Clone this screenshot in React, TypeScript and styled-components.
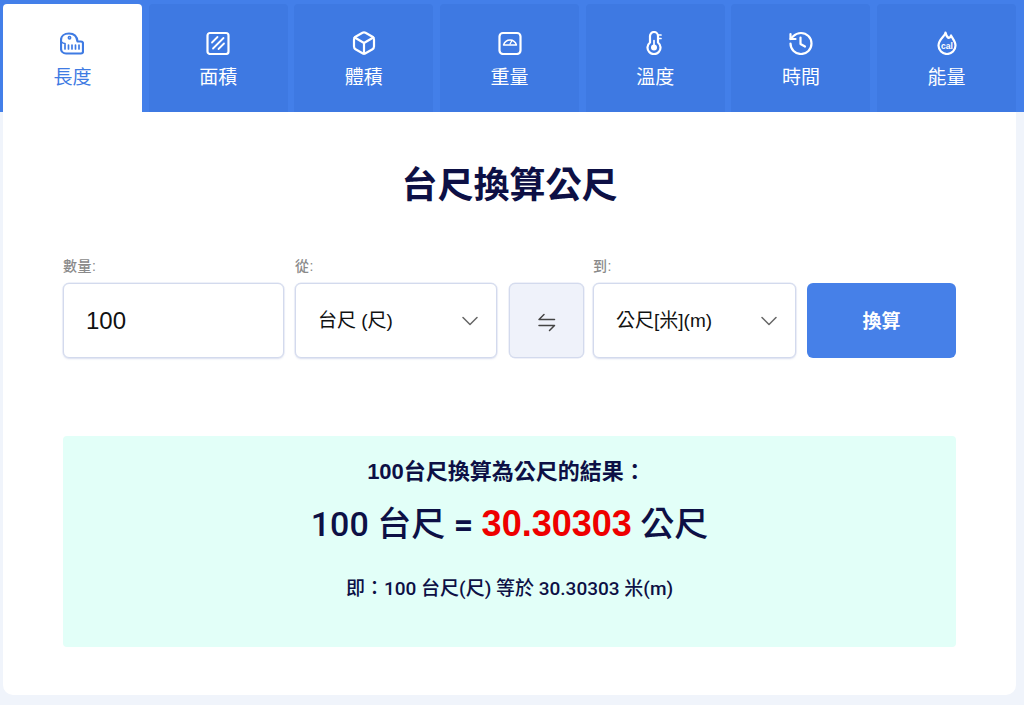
import * as React from 'react';
import styled, { createGlobalStyle } from 'styled-components';

const GlobalStyle = createGlobalStyle`
  html, body {
    margin: 0;
    background: #f0f4fb;
  }
  body {
    font-family: "Liberation Sans", "Noto Sans CJK TC", sans-serif;
    color: #0d1045;
  }
`;

const Page = styled.div`
  width: 1024px;
  height: 705px;
  overflow: hidden;
`;

const TabBar = styled.nav`
  display: flex;
  gap: 6.800px;
  height: 112px;
  padding: 4px 8px 0 3px;
  box-sizing: border-box;
  background: #437fe9;
`;

const Tab = styled.a<{ $active?: boolean }>`
  flex: 1;
  display: flex;
  flex-direction: column;
  align-items: center;
  padding-top: 27px;
  border-radius: 4px 4px 0 0;
  background: ${(p) => (p.$active ? '#ffffff' : '#3e79e2')};
  color: ${(p) => (p.$active ? '#3f7be3' : '#ffffff')};
  font-size: 19px;
  line-height: 24px;
  svg {
    display: block;
    margin-bottom: 11px;
  }
`;

const Card = styled.main`
  width: 1013px;
  height: 583px;
  margin-left: 3px;
  padding: 0 60px;
  box-sizing: border-box;
  background: #ffffff;
  border-radius: 0 0 10px 10px;
`;

const Title = styled.h1`
  margin: 0;
  padding-top: 50px;
  height: 141px;
  box-sizing: border-box;
  font-size: 36px;
  line-height: 48px;
  font-weight: 700;
  text-align: center;
  color: #0d1045;
`;

const Form = styled.div`
  display: flex;
  align-items: flex-end;
  height: 105px;
`;

const Field = styled.div<{ $w: number; $mr: number }>`
  width: ${(p) => p.$w}px;
  margin-right: ${(p) => p.$mr}px;
  flex: none;
`;

const Label = styled.label`
  display: block;
  height: 27px;
  font-size: 14px;
  line-height: 20px;
  font-weight: 500;
  letter-spacing: 0.500px;
  color: #8a8a8a;
`;

const Control = styled.div`
  position: relative;
  height: 75px;
`;

const controlBox = `
  width: 100%;
  height: 75px;
  box-sizing: border-box;
  border: 1px solid #d3daed;
  border-radius: 6px;
  box-shadow: 0 0 0 0.500px #dfe4f3, 0 1px 2px rgba(80, 100, 170, 0.2);
  background: #ffffff;
  font-family: "Liberation Sans", "Noto Sans CJK TC", sans-serif;
  color: #111111;
  outline: none;
`;

const Input = styled.input`
  ${controlBox}
  padding: 0 22px;
  font-size: 24px;
`;

const Select = styled.select`
  ${controlBox}
  appearance: none;
  padding: 0 22px;
  font-size: 19px;
`;

const Chevron = styled.svg`
  position: absolute;
  right: 19px;
  top: 33px;
  pointer-events: none;
`;

const SwapButton = styled.button`
  flex: none;
  width: 75px;
  height: 75px;
  margin-right: 9px;
  padding: 0;
  display: flex;
  align-items: center;
  justify-content: center;
  border: 1px solid #d3daed;
  border-radius: 6px;
  box-shadow: 0 0 0 0.500px #dfe4f3;
  background: #eff2fa;
  color: #444444;
`;

const SubmitButton = styled.button`
  flex: none;
  width: 149px;
  height: 75px;
  padding: 0 0 2px;
  border: 0;
  border-radius: 6px;
  background: #4680e8;
  color: #ffffff;
  font-family: inherit;
  font-size: 19px;
  font-weight: 700;
`;

const Result = styled.section`
  width: 893px;
  height: 211px;
  margin-top: 78px;
  box-sizing: border-box;
  padding-top: 22px;
  border-radius: 4px;
  background: #e2fff8;
  text-align: center;
`;

const ResultHead = styled.div`
  padding-right: 6px;
  font-size: 22px;
  line-height: 28px;
  font-weight: 700;
`;

const ResultMain = styled.div`
  margin-top: 16px;
  font-family: Roboto, "Noto Sans CJK TC", sans-serif;
  font-size: 34px;
  line-height: 44px;
  font-weight: 500;
`;

const Value = styled.span`
  font-family: "Liberation Sans", "Noto Sans CJK TC", sans-serif;
  font-size: 36px;
  font-weight: 700;
  color: #ee0000;
`;

const Equals = styled.span`
  font-weight: 700;
`;

const ResultNote = styled.div`
  margin-top: 30px;
  font-family: Roboto, "Noto Sans CJK TC", sans-serif;
  font-size: 19px;
  line-height: 26px;
  font-weight: 500;
`;

const Icon: React.FC<{ children: React.ReactNode }> = ({ children }) => (
  <svg width="24" height="24" viewBox="0 0 24 24" fill="none" stroke="currentColor" strokeWidth="2.200" strokeLinecap="round" strokeLinejoin="round">
    {children}
  </svg>
);

const tabs: { label: string; icon: React.ReactNode }[] = [
  {
    label: '長度',
    icon: (
      <Icon>
        <path d="M1 11V9C1 5 4.500 2.500 9 2.500S17 5 17.500 10.500H21A2 2 0 0 1 23 12.500V20.500A2 2 0 0 1 21 22.500H6A5 5 0 0 1 1 17.500Z" />
        <circle cx="9.500" cy="6.800" r="1.200" strokeWidth="1.500" />
        <path d="M1.500 11C2.500 12 3.500 12.500 5 12.500V18M8.500 14V18M12 14V18M15.500 14V18M19 14V18" strokeWidth="1.700" />
      </Icon>
    ),
  },
  {
    label: '面積',
    icon: (
      <Icon>
        <rect x="1.500" y="2" width="21" height="21" rx="2.500" />
        <path d="M6 11.500L11.500 6M7 17.500L17.500 7M12.500 18L18 12.500" strokeWidth="1.800" />
      </Icon>
    ),
  },
  {
    label: '體積',
    icon: (
      <Icon>
        <path d="M10.500 1.700A3 3 0 0 1 13.500 1.700L20.500 5.800A3 3 0 0 1 22 8.400V15.600A3 3 0 0 1 20.500 18.200L13.500 22.300A3 3 0 0 1 10.500 22.300L3.500 18.200A3 3 0 0 1 2 15.600V8.400A3 3 0 0 1 3.500 5.800Z" />
        <path d="M2.700 6.500L12 12L21.300 6.500M12 12V22.500" />
      </Icon>
    ),
  },
  {
    label: '重量',
    icon: (
      <Icon>
        <rect x="1.500" y="2" width="21" height="21" rx="3.500" />
        <path d="M5.500 14A7 8 0 0 1 18.500 14Z" strokeWidth="1.500" />
        <path d="M12 13L14 9.500" strokeWidth="1.300" />
      </Icon>
    ),
  },
  {
    label: '溫度',
    icon: (
      <Icon>
        <path d="M7 11.500V5A4 4 0 0 1 15 5V11.500A6.500 6.500 0 1 1 7 11.500Z" />
        <circle cx="11" cy="16.600" r="3" fill="currentColor" stroke="none" />
        <path d="M11 15V9.500M15 4H18M15 7.500H18" strokeWidth="1.700" />
      </Icon>
    ),
  },
  {
    label: '時間',
    icon: (
      <Icon>
        <path d="M1.500 12.500A10.500 10.500 0 1 0 12 2A11 11 0 0 0 4.200 5.200L1.500 8" />
        <path d="M1.500 3V8H6.500M11.500 6.500V13L16 15.500" />
      </Icon>
    ),
  },
  {
    label: '能量',
    icon: (
      <Icon>
        <path d="M10.500 1.500C10.500 5 3.500 8 3.500 14.500A8.500 8.500 0 0 0 20.500 14.500C20.500 10.500 17.500 7.500 16 4.500C15.500 6 14.500 7 13.500 7C12 6 11 4 10.500 1.500Z" />
        <text x="12" y="18" textAnchor="middle" fontFamily="Liberation Sans" fontSize="8.500" fontWeight="700" fill="currentColor" stroke="none">cal</text>
      </Icon>
    ),
  },
];

const ChevronIcon = () => (
  <Chevron width="16" height="10" viewBox="0 0 16 10" fill="none" stroke="#666666" strokeWidth="1.500" strokeLinecap="round" strokeLinejoin="round">
    <path d="M1 1.500L8 8.500L15 1.500" />
  </Chevron>
);

const App: React.FC = () => (
  <Page>
    <GlobalStyle />
    <TabBar>
      {tabs.map((t, i) => (
        <Tab key={t.label} $active={i === 0}>
          {t.icon}
          {t.label}
        </Tab>
      ))}
    </TabBar>
    <Card>
      <Title>台尺換算公尺</Title>
      <Form>
        <Field $w={221} $mr={11}>
          <Label>數量:</Label>
          <Control>
            <Input defaultValue="100" />
          </Control>
        </Field>
        <Field $w={202} $mr={12}>
          <Label>從:</Label>
          <Control>
            <Select defaultValue="tc">
              <option value="tc">台尺 (尺)</option>
            </Select>
            <ChevronIcon />
          </Control>
        </Field>
        <SwapButton aria-label="swap">
          <svg width="20" height="24" viewBox="0 0 20 24" fill="none" stroke="currentColor" strokeWidth="1.500" strokeLinecap="round" strokeLinejoin="round">
            <path d="M17.500 10.500H2L7 5.500M2 16.500H17.500L12.500 21.500" />
          </svg>
        </SwapButton>
        <Field $w={203} $mr={11}>
          <Label>到:</Label>
          <Control>
            <Select defaultValue="m">
              <option value="m">公尺[米](m)</option>
            </Select>
            <ChevronIcon />
          </Control>
        </Field>
        <SubmitButton>換算</SubmitButton>
      </Form>
      <Result>
        <ResultHead>100台尺換算為公尺的結果{'\uFF1A'}</ResultHead>
        <ResultMain>
          100 台尺 <Equals>=</Equals> <Value>30.30303</Value> 公尺
        </ResultMain>
        <ResultNote>即{'\uFF1A'}100 台尺(尺) 等於 30.30303 米(m)</ResultNote>
      </Result>
    </Card>
  </Page>
);

export default App;
